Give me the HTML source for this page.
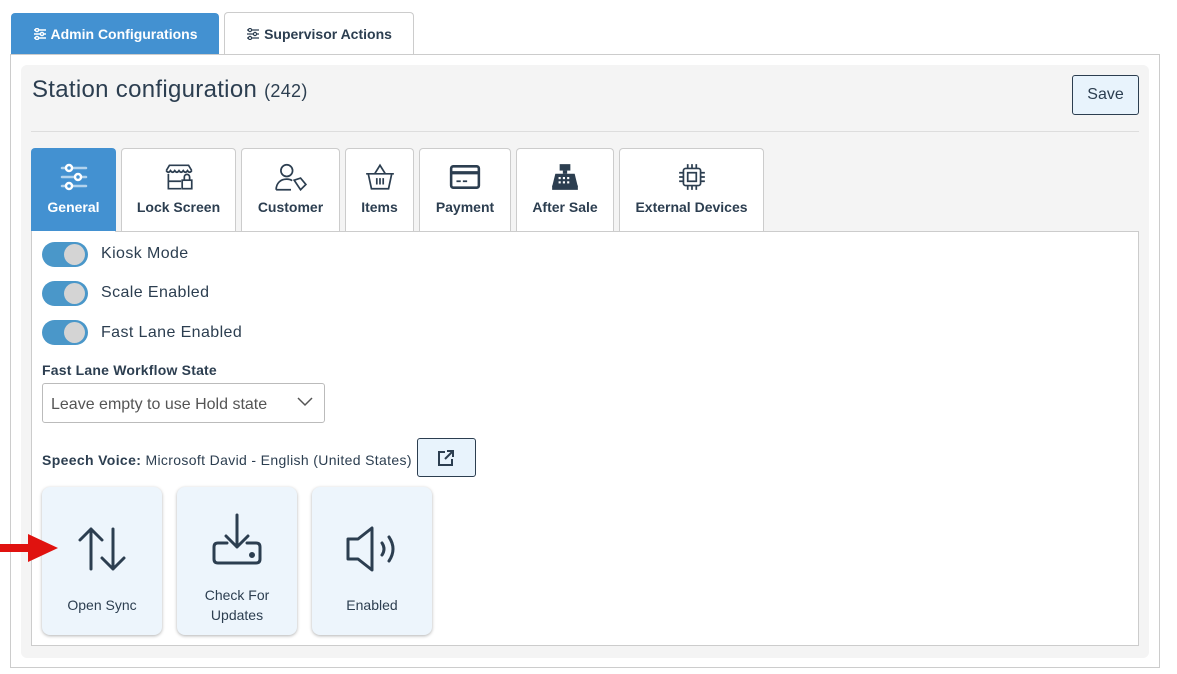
<!DOCTYPE html>
<html><head><style>
body{margin:0;width:1177px;height:674px;background:#fff;font-family:"Liberation Sans",sans-serif;color:#2c3e50;position:relative;overflow:hidden}
.a{position:absolute;box-sizing:border-box}
.tab{border:1px solid #ccc;border-bottom:none;border-radius:4px 4px 0 0;background:#fff;text-align:center;font-size:14px;font-weight:bold}
.st{border:1px solid #ccc;border-bottom:none;border-radius:4px 4px 0 0;background:#fff;text-align:center;font-size:14px;font-weight:bold;color:#2c3e50}
.st svg{display:block;margin:14px auto 8px}
.tg{width:46px;height:25px;border-radius:13px;background:#4a97c9}
.tg:after{content:"";position:absolute;right:3px;top:2px;width:21px;height:21px;border-radius:50%;background:#d4d4d4}
.lbl{font-size:16px;letter-spacing:.4px}
.card{background:#edf5fc;border-radius:8px;box-shadow:0 1px 3px rgba(0,0,0,.3);text-align:center;font-size:14px;width:120px;height:148px;top:487px}
</style></head><body>
<div class="a tab" style="left:11px;top:13px;width:208px;height:42px;background:#4391d1;border-color:#4391d1;color:#fff;line-height:40px">
<svg width="14" height="12" viewBox="0 0 14 12" style="vertical-align:-1px;margin-right:4px" fill="none" stroke="#fff" stroke-width="1.4"><path d="M1 2h12M1 6h12M1 10h12"/><circle cx="4" cy="2" r="1.6" fill="#4391d1"/><circle cx="9" cy="6" r="1.6" fill="#4391d1"/><circle cx="4" cy="10" r="1.6" fill="#4391d1"/></svg>Admin Configurations</div>
<div class="a tab" style="left:224px;top:12px;width:190px;height:43px;color:#2c3e50;font-weight:bold;line-height:42px">
<svg width="14" height="12" viewBox="0 0 14 12" style="vertical-align:-1px;margin-right:4px" fill="none" stroke="#2c3e50" stroke-width="1.2"><path d="M1 2h12M1 6h12M1 10h12"/><circle cx="4" cy="2" r="1.6" fill="#fff"/><circle cx="9" cy="6" r="1.6" fill="#fff"/><circle cx="4" cy="10" r="1.6" fill="#fff"/></svg>Supervisor Actions</div>
<div class="a" style="left:10px;top:54px;width:1150px;height:614px;border:1px solid #ccc"></div>
<div class="a" style="left:21px;top:65px;width:1128px;height:593px;background:#f4f4f4;border-radius:6px"></div>
<div class="a" style="left:32px;top:76px;font-size:24px;white-space:nowrap;letter-spacing:.3px">Station configuration <span style="font-size:18px">(242)</span></div>
<div class="a" style="left:1072px;top:75px;width:67px;height:40px;background:#e8f3fc;border:1px solid #2c3e50;border-radius:3px;font-size:16px;text-align:center;line-height:38px">Save</div>
<div class="a" style="left:31px;top:131px;width:1108px;height:1px;background:#ddd"></div>

<div class="a st" style="left:31px;top:148px;width:85px;height:84px;background:#4391d1;border-color:#4391d1;color:#fff">
<svg width="28" height="28" viewBox="0 0 28 26" fill="none" stroke="#fff" stroke-width="2.5" stroke-linecap="round"><path d="M2 4h24M2 13h24M2 22h24" stroke-opacity=".6"/><circle cx="9" cy="4" r="3" fill="#4391d1"/><circle cx="18" cy="13" r="3" fill="#4391d1"/><circle cx="9" cy="22" r="3" fill="#4391d1"/></svg>General</div>
<div class="a st" style="left:121px;top:148px;width:115px;height:84px">
<svg width="34" height="28" viewBox="0 0 32 26" fill="none" stroke="#2c3e50" stroke-width="1.6"><path d="M4 7l3-5h18l3 5M4 7q2 3 4 0q2 3 4 0q2 3 4 0q2 3 4 0q2 3 4 0q2 3 4 0M6 10v14h12M6 17h12"/><rect x="19" y="16" width="9" height="8"/><path d="M21 16v-3a2.5 2.5 0 015 0v3"/></svg>Lock Screen</div>
<div class="a st" style="left:241px;top:148px;width:99px;height:84px">
<svg width="34" height="28" viewBox="0 0 32 26" fill="none" stroke="#2c3e50" stroke-width="1.6"><circle cx="12" cy="7" r="5.5"/><path d="M2 25c0-6 4-10 10-10 2 0 4 .5 5 1.5M2 25h14"/><path d="M19 16l6-2 5 6-5 5z"/></svg>Customer</div>
<div class="a st" style="left:345px;top:148px;width:69px;height:84px">
<svg width="32" height="28" viewBox="0 0 30 26" fill="none" stroke="#2c3e50" stroke-width="1.6"><path d="M2 10h26M4 10l3 14h16l3-14M10 10l5-8 5 8M12 14v6M15 14v6M18 14v6"/></svg>Items</div>
<div class="a st" style="left:419px;top:148px;width:92px;height:84px">
<svg width="32" height="28" viewBox="0 0 30 26" fill="none" stroke="#2c3e50" stroke-width="2.4"><rect x="2" y="3" width="26" height="20" rx="2"/><path d="M2 9h26" stroke-width="3"/><path d="M7 17h4M13 17h4" stroke-width="1.6"/></svg>Payment</div>
<div class="a st" style="left:516px;top:148px;width:98px;height:84px">
<svg width="30" height="28" viewBox="0 0 28 26"><rect x="9" y="1" width="10" height="6" fill="#2c3e50"/><rect x="12" y="7" width="4" height="3" fill="#2c3e50"/><path d="M5 10h18l3 12H2z" fill="#2c3e50"/><rect x="2" y="21" width="24" height="4" fill="#2c3e50"/><g fill="#fff"><rect x="8" y="13" width="2" height="2"/><rect x="12" y="13" width="2" height="2"/><rect x="16" y="13" width="2" height="2"/><rect x="8" y="17" width="2" height="2"/><rect x="12" y="17" width="2" height="2"/><rect x="16" y="17" width="2" height="2"/></g></svg>After Sale</div>
<div class="a st" style="left:619px;top:148px;width:145px;height:84px">
<svg width="30" height="28" viewBox="0 0 28 26" fill="none" stroke="#2c3e50" stroke-width="1.6"><rect x="6" y="5" width="16" height="16" rx="2"/><rect x="10" y="9" width="8" height="8"/><path d="M10 1v4M14 1v4M18 1v4M10 21v4M14 21v4M18 21v4M2 9h4M2 13h4M2 17h4M22 9h4M22 13h4M22 17h4"/></svg>External Devices</div>

<div class="a" style="left:31px;top:231px;width:1108px;height:415px;background:#fff;border:1px solid #ccc"></div>
<div class="a" style="left:32px;top:231px;width:83px;height:1px;background:#fff"></div>
<div class="a tg" style="left:42px;top:242px"></div><div class="a lbl" style="left:101px;top:245px">Kiosk Mode</div>
<div class="a tg" style="left:42px;top:281px"></div><div class="a lbl" style="left:101px;top:284px">Scale Enabled</div>
<div class="a tg" style="left:42px;top:320px"></div><div class="a lbl" style="left:101px;top:324px">Fast Lane Enabled</div>
<div class="a" style="left:42px;top:362px;font-size:14px;font-weight:bold;letter-spacing:.2px">Fast Lane Workflow State</div>
<div class="a" style="left:42px;top:383px;width:283px;height:40px;border:1px solid #bbb;border-radius:3px;font-size:16px;color:#555;padding:12px 0 0 8px">Leave empty to use Hold state
<svg class="a" style="left:254px;top:13px" width="16" height="10" viewBox="0 0 16 10" fill="none" stroke="#555" stroke-width="1.5"><path d="M1 1l7 7 7-7"/></svg></div>
<div class="a" style="left:42px;top:452px;font-size:14px;white-space:nowrap;letter-spacing:.35px"><b>Speech Voice:</b> Microsoft David - English (United States)</div>
<div class="a" style="left:417px;top:438px;width:59px;height:39px;background:#e8f3fc;border:1px solid #2c3e50;border-radius:3px">
<svg class="a" style="left:19px;top:11px" width="18" height="17" viewBox="0 0 18 17" fill="none" stroke="#2c3e50" stroke-width="2"><path d="M8 2H2v13h13V9M10 1h6v6M16 1L8 9"/></svg></div>

<div class="a card" style="left:42px">
<svg style="display:block;margin:38px auto 0" width="50" height="48" viewBox="0 0 50 48" fill="none" stroke="#2c3e50" stroke-width="3" stroke-linecap="round" stroke-linejoin="round"><path d="M14 44V4M3 15L14 4l11 11M36 4v40M25 33l11 11 11-11"/></svg>
<div style="margin-top:24px">Open Sync</div></div>
<div class="a card" style="left:177px">
<svg style="display:block;margin:26px auto 0" width="54" height="52" viewBox="0 0 54 52" fill="none" stroke="#2c3e50" stroke-width="3" stroke-linecap="round" stroke-linejoin="round"><path d="M27 2v32M16 23l11 11 11-11M17 30H8q-4 0-4 4v12q0 4 4 4h38q4 0 4-4V34q0-4-4-4h-9"/><circle cx="42" cy="42" r="1.5" fill="#2c3e50"/></svg>
<div style="margin-top:20px;line-height:20px">Check For<br>Updates</div></div>
<div class="a card" style="left:312px">
<svg style="display:block;margin:38px auto 0" width="56" height="48" viewBox="0 0 56 48" fill="none" stroke="#2c3e50" stroke-width="3" stroke-linejoin="round" stroke-linecap="round"><path d="M4 14h10L28 3v42L14 34H4z"/><path d="M38 18q4 6 0 12M45 12q8 12 0 24"/></svg>
<div style="margin-top:24px">Enabled</div></div>

<svg class="a" style="left:0;top:532px" width="60" height="32" viewBox="0 0 60 32"><path d="M0 12h28V2l30 14-30 14V20H0z" fill="#e0120f"/></svg>
</body></html>
